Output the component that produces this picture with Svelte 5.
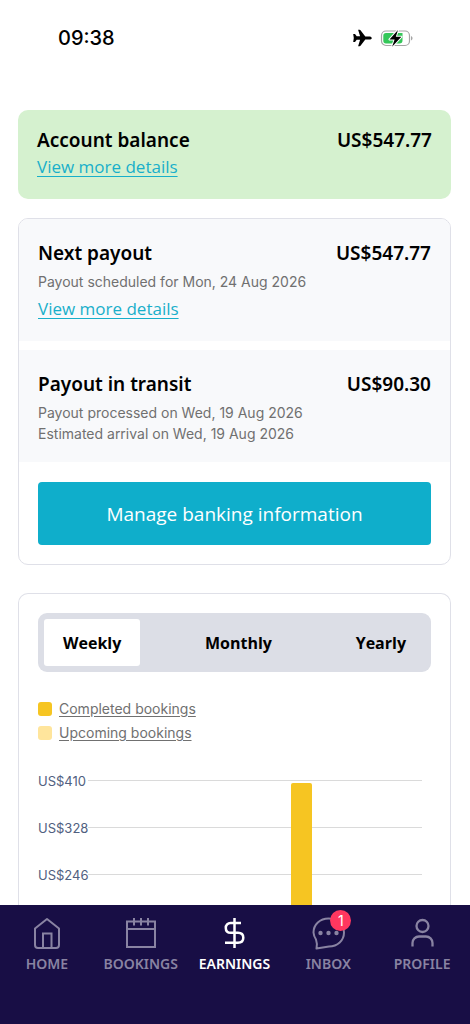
<script>
  let period = $state('Weekly');
  let tab = $state('EARNINGS');
  const periods = ['Weekly', 'Monthly', 'Yearly'];
  const ticks = [410, 328, 246];
  const bars = [{ left: 60.7, width: 6.4 }];
  const tabs = ['HOME', 'BOOKINGS', 'EARNINGS', 'INBOX', 'PROFILE'];
</script>

<div class="screen">
  <header class="status">
    <time>09:38</time>
    <div class="status-icons">
      <svg width="20" height="18" viewBox="0 0 20 18" aria-hidden="true">
        <path d="M19.8 9c0 1-1.300 1.600-2.500 1.600h-4L8.500 16.800c-.2.300-.5.500-.9.500H6.100l2-6.600H4.700l-1.500 2.100c-.2.200-.4.300-.7.300H1.200L1.800 9l-.6-4.100h1.300c.300 0 .5.100.7.300l1.500 2.100h3.400L6.100.7h1.500c.4 0 .7.200.9.500l4.800 6.200h4c1.200 0 2.500.6 2.500 1.600z" fill="#000" />
      </svg>
      <svg width="34" height="18" viewBox="0 0 34 18" aria-hidden="true">
        <rect x="1.500" y="2" width="28" height="14.500" rx="4.500" fill="#fff" stroke="#a5a5a5" stroke-width="1.200" />
        <path d="M31 7v4.500c1-.4 1.500-1.200 1.500-2.200S32 7.400 31 7z" fill="#a5a5a5" />
        <path d="M6 4h16.500v7.500a3 3 0 0 1-3 3H6a2.700 2.700 0 0 1-2.700-2.700V6.700A2.700 2.700 0 0 1 6 4z" fill="#34c759" />
        <path d="M18 1 9.500 10.500h5.100l-2.500 7.200 9.300-9.900h-5.600z" fill="#000" stroke="#fff" stroke-width="2" stroke-linejoin="round" paint-order="stroke" />
      </svg>
    </div>
  </header>

  <main>
    <section class="balance">
      <div class="line"><h2>Account balance</h2><strong>US$547.77</strong></div>
      <a class="more" href="#balance">View more details</a>
    </section>

    <section class="card">
      <div class="payout">
        <div class="line"><h2>Next payout</h2><strong>US$547.77</strong></div>
        <p>Payout scheduled for Mon, 24 Aug 2026</p>
        <a class="more" href="#payout">View more details</a>
      </div>
      <div class="payout">
        <div class="line"><h2>Payout in transit</h2><strong>US$90.30</strong></div>
        <p>Payout processed on Wed, 19 Aug 2026</p>
        <p>Estimated arrival on Wed, 19 Aug 2026</p>
      </div>
      <div class="action"><button class="manage">Manage banking information</button></div>
    </section>

    <section class="card report">
      <div class="segments">
        {#each periods as p}
          <button class:active={p === period} aria-pressed={p === period} onclick={() => (period = p)}>{p}</button>
        {/each}
      </div>
      <ul class="legend">
        <li><i class="done"></i><a href="#completed">Completed bookings</a></li>
        <li><i class="soon"></i><a href="#upcoming">Upcoming bookings</a></li>
      </ul>
      <div class="chart">
        {#each ticks as t}
          <div class="tick"><span>US${t}</span><hr /></div>
        {/each}
        <div class="plot">
          {#each bars as b}
            <div class="bar" style="left: {b.left}%; width: {b.width}%"></div>
          {/each}
        </div>
      </div>
    </section>
  </main>

  <nav>
    {#each tabs as t}
      <button class:current={t === tab} onclick={() => (tab = t)}>
        <span class="glyph">
          <svg width="36" height="36" viewBox="0 0 36 36" fill="none" stroke="currentColor" stroke-width="2" aria-hidden="true">
            {#if t === 'HOME'}
              <path d="M6 13.500 18 4l12 9.500V30a3 3 0 0 1-3 3H9a3 3 0 0 1-3-3z" stroke-linejoin="round" />
              <path d="M14 33V18.500h8.500V33" />
            {:else if t === 'BOOKINGS'}
              <path d="M4 6.500h28v25.500H4zM4 14h28M11 3v7.500M18 3v7.500M25 3v7.500" />
            {:else if t === 'EARNINGS'}
              <path d="M18.500 3v30M25 8H14.500a4.700 4.700 0 0 0-4.700 4.900q0 4.900 5 4.900h7.200q5.300 0 5.300 5t-5.300 5H9" stroke-width="2.500" />
            {:else if t === 'INBOX'}
              <path d="M6 24.500A14 14 0 0 1 3.500 17.500C3.500 9.500 10 3.500 18.500 3.500S34 9.500 34 17.500 27.500 31.500 19 31.500L6.500 33.500Q7.500 28.500 6 24.500z" stroke-linejoin="round" />
              <g fill="currentColor" stroke="none"><circle cx="10.500" cy="18" r="2.200" /><circle cx="18.500" cy="18" r="2.200" /><circle cx="26.500" cy="18" r="2.200" /></g>
            {:else}
              <circle cx="18.500" cy="11" r="6" stroke-width="2.300" />
              <path d="M8.500 31.500v-3.500a6.500 6.500 0 0 1 6.500-6.500h7a6.500 6.500 0 0 1 6.500 6.500v3.500" stroke-width="2.300" />
            {/if}
          </svg>
          {#if t === 'INBOX'}<b class="badge">1</b>{/if}
        </span>
        <span>{t}</span>
      </button>
    {/each}
  </nav>
</div>

<style>
  :global(body) { background: #fff; }
  .screen {
    display: flex; flex-direction: column; height: 100vh; overflow: hidden;
    font-family: "Open Sans", "Noto Sans", sans-serif; color: #000;
  }
  button { border: 0; padding: 0; margin: 0; background: none; font: inherit; color: inherit; cursor: pointer; }
  h2, p, ul { margin: 0; padding: 0; }
  .status {
    flex: none; display: flex; justify-content: space-between; align-items: center;
    padding: 26px 56px 0 58px; height: 24px; font: 500 20px/24px Inter, sans-serif;
  }
  .status-icons { display: flex; align-items: center; gap: 8px; }
  main { flex: 1; min-height: 0; overflow: hidden; display: flex; flex-direction: column; padding: 60px 19px 0 18px; }
  section { flex: none; }
  .balance { background: #d5f1cf; border-radius: 10px; padding: 16px 19px 20px; margin-bottom: 19px; }
  .line { display: flex; justify-content: space-between; align-items: center; font-family: "Noto Sans", "Open Sans", sans-serif; font-size: 19px; line-height: 28px; }
  h2, strong { font-size: inherit; font-weight: 600; }
  .more { display: block; width: fit-content; font-size: 17px; line-height: 25px; color: #18afca; text-decoration: underline; text-decoration-thickness: 1px; text-underline-offset: 3px; }
  .card { border: 1px solid #dfe0e8; border-radius: 10px; overflow: hidden; margin-bottom: 28px; }
  .payout { background: #f8f9fb; padding: 20px 19px; }
  .payout .more { font-weight: 500; margin-top: 4px; }
  .payout + .payout { margin-top: 9px; padding-bottom: 18px; }
  p { font: 400 14px/21px Inter, sans-serif; color: #707070; }
  .payout .line { margin-bottom: 4px; }
  .action { padding: 20px 19px 19px; }
  .manage { display: block; width: 100%; height: 63px; border-radius: 4px; background: #0faecb; color: #fff; font-size: 19px; font-weight: 500; }
  .report { flex: 1; min-height: 0; display: flex; flex-direction: column; padding: 19px 19px 0; margin-bottom: 0; border-bottom: 0; border-radius: 10px 10px 0 0; }
  .segments { display: flex; justify-content: space-between; flex: none; background: #dcdee6; border-radius: 9px; padding: 6px; }
  .segments button { height: 47px; padding: 0 19px; border-radius: 3px; font-size: 16px; font-weight: 700; }
  .segments .active { background: #fff; }
  .legend { list-style: none; flex: none; margin-top: 25px; }
  .legend li { display: flex; align-items: center; gap: 7px; font: 400 14px/24px Inter, sans-serif; }
  .legend a { color: #707070; text-underline-offset: 2px; }
  .legend i { width: 14px; height: 14px; border-radius: 3px; }
  .done { background: #f6c522; }
  .soon { background: #ffe59c; }
  .chart { position: relative; flex: 1; min-height: 0; margin: 12px 9px 0 0; }
  .tick { display: flex; align-items: center; height: 47px; font: 400 13px/16px Inter, sans-serif; color: #506080; }
  .tick span { width: 50px; }
  hr { flex: 1; border: 0; margin: 0; height: 1px; background: #dadada; }
  .plot { position: absolute; inset: 26px 0 0 50px; }
  .bar { position: absolute; top: 0; bottom: 0; border-radius: 2px 2px 0 0; background: #f6c522; }
  nav { flex: none; display: grid; grid-template-columns: repeat(5, 1fr); align-items: start; background: #180e45; padding: 10px 1px 51px 0; }
  nav button { display: flex; flex-direction: column; align-items: center; color: #8983a2; font-family: "Noto Sans", "Open Sans", sans-serif; font-size: 14px; line-height: 18px; font-weight: 600; gap: 4px; }
  nav .current { color: #fff; }
  .glyph { position: relative; height: 36px; }
  .badge { position: absolute; right: -5px; top: -5px; width: 21px; height: 21px; border-radius: 50%; background: #ff375f; color: #fff; font: 400 14px/21px Inter, sans-serif; text-align: center; }
</style>
